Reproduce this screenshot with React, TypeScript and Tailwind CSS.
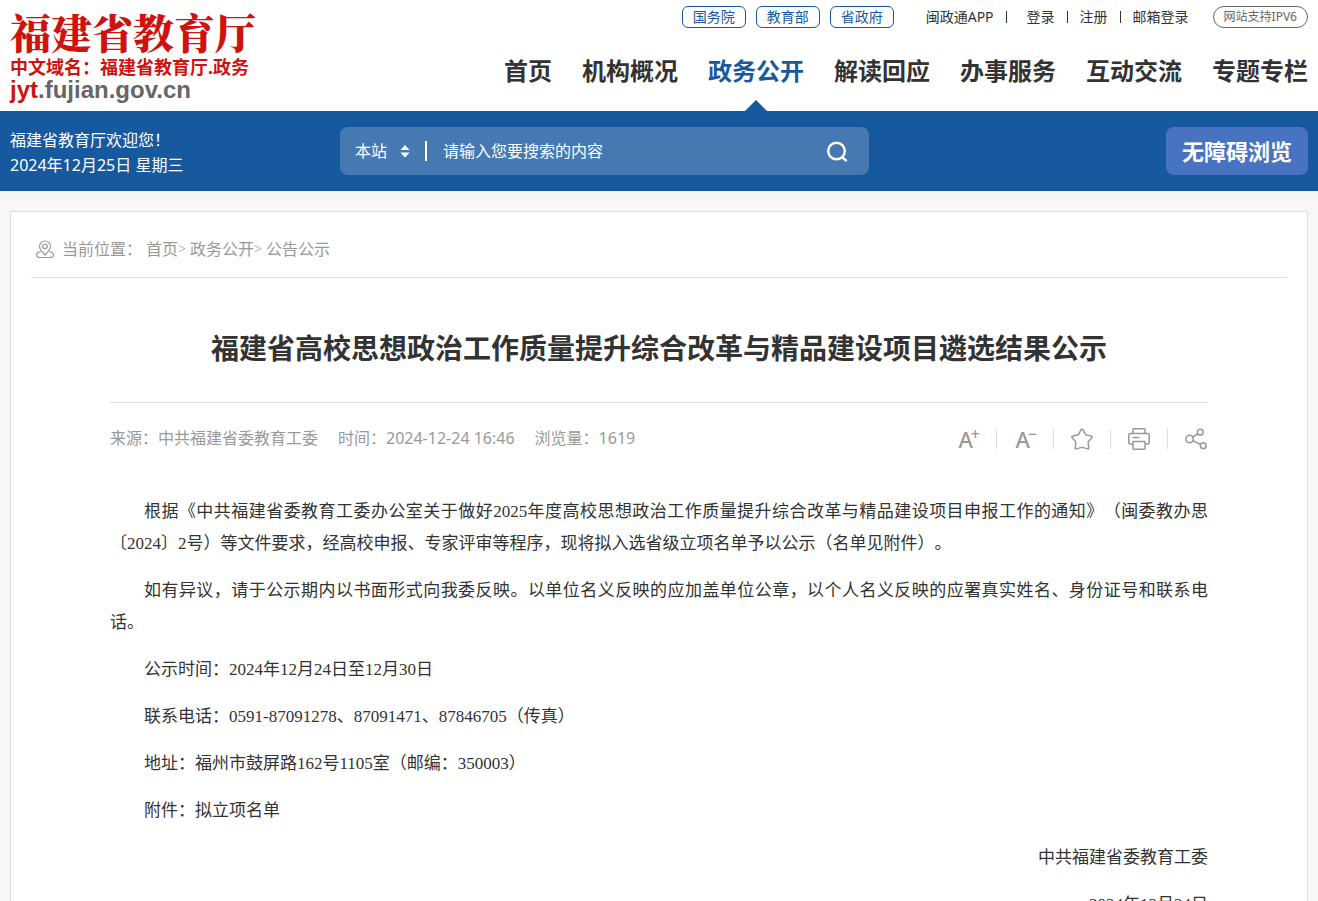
import type { ReactNode } from 'react';

const portals = ['国务院', '教育部', '省政府'];

const navItems = [
  { label: '首页' },
  { label: '机构概况' },
  { label: '政务公开', active: true },
  { label: '解读回应' },
  { label: '办事服务' },
  { label: '互动交流' },
  { label: '专题专栏' },
];

const paragraphs = [
  '根据《中共福建省委教育工委办公室关于做好2025年度高校思想政治工作质量提升综合改革与精品建设项目申报工作的通知》（闽委教办思〔2024〕2号）等文件要求，经高校申报、专家评审等程序，现将拟入选省级立项名单予以公示（名单见附件）。',
  '如有异议，请于公示期内以书面形式向我委反映。以单位名义反映的应加盖单位公章，以个人名义反映的应署真实姓名、身份证号和联系电话。',
  '公示时间：2024年12月24日至12月30日',
  '联系电话：0591-87091278、87091471、87846705（传真）',
  '地址：福州市鼓屏路162号1105室（邮编：350003）',
];

function Logo() {
  return (
    <a href="#" className="block pt-2 text-[#d0120f]">
      <span className="block font-['Noto_Serif_CJK_SC','Noto_Sans_CJK_SC',serif] text-[41px] leading-[48px] font-black">
        福建省教育厅
      </span>
      <span className="block text-lg leading-[22px] font-bold">中文域名：福建省教育厅.政务</span>
      <span className="block font-['Liberation_Sans',sans-serif] text-2xl leading-6 font-bold text-[#666]">
        <span className="text-[#d0120f]">jyt</span>.fujian.gov.cn
      </span>
    </a>
  );
}

function TopLinks() {
  return (
    <div className="flex items-center text-sm leading-5 text-[#333]">
      <div className="flex gap-[10px]">
        {portals.map((name) => (
          <a
            key={name}
            href="#"
            className="rounded-md border border-[#17599f] px-[10px] text-[#17599f]"
          >
            {name}
          </a>
        ))}
      </div>
      <div className="mr-6 ml-8 flex items-center gap-3">
        <a href="#">闽政通APP</a>
        <span className="mr-2 h-3 w-px bg-[#333]" />
        <a href="#">登录</a>
        <span className="h-3 w-px bg-[#333]" />
        <a href="#">注册</a>
        <span className="h-3 w-px bg-[#333]" />
        <a href="#">邮箱登录</a>
      </div>
      <a href="#" className="rounded-full border border-[#666] px-[10px] text-xs leading-5 text-[#666]">
        网站支持IPV6
      </a>
    </div>
  );
}

function Header() {
  return (
    <header className="flex justify-between bg-white px-[10px]">
      <Logo />
      <div className="flex h-[111px] flex-col items-end pt-[6px]">
        <TopLinks />
        <nav className="flex flex-1 gap-[30px] pt-[25px] text-2xl leading-9 font-bold text-[#333]">
          {navItems.map((item) => (
            <a
              key={item.label}
              href="#"
              className={item.active ? 'relative text-[#17599f]' : 'relative'}
            >
              {item.label}
              {item.active && (
                <svg
                  className="absolute bottom-0 left-1/2 -translate-x-1/2"
                  width="22"
                  height="11"
                  viewBox="0 0 22 11"
                >
                  <path d="M11 0 22 11H0Z" fill="#17599f" />
                </svg>
              )}
            </a>
          ))}
        </nav>
      </div>
    </header>
  );
}

function SearchBar() {
  return (
    <div className="flex h-20 items-center bg-[#17599f] px-[10px] text-base text-white">
      <div className="w-[330px] pt-1 leading-[25px]">
        <p>福建省教育厅欢迎您！</p>
        <p>2024年12月25日 星期三</p>
      </div>
      <form
        className="flex h-12 w-[529px] items-center rounded-lg bg-[#4679b2] pl-[15px]"
        onSubmit={(e) => e.preventDefault()}
      >
        <div className="relative">
          <select aria-label="搜索范围" className="w-14 appearance-none bg-transparent outline-none">
            <option>本站</option>
          </select>
          <svg
            className="pointer-events-none absolute top-1/2 right-0 -translate-y-1/2"
            width="12"
            height="14"
            viewBox="0 0 12 14"
            fill="#fff"
          >
            <path d="M6 1 10.500 6H1.500ZM6 13.500 1.500 8.500H10.500Z" />
          </svg>
        </div>
        <span className="ml-3.5 h-5 w-0.5 bg-white" />
        <input
          type="text"
          aria-label="搜索内容"
          placeholder="请输入您要搜索的内容"
          className="ml-4 min-w-0 flex-1 bg-transparent outline-none placeholder:text-white"
        />
        <button type="submit" aria-label="搜索" className="px-5">
          <svg width="24" height="24" viewBox="0 0 24 24" fill="none" stroke="#fff" strokeWidth="2.4">
            <circle cx="11.5" cy="12" r="8.3" />
            <path d="m17.5 18.5 3.5 3" strokeLinecap="round" />
          </svg>
        </button>
      </form>
      <button type="button" className="ml-auto h-12 rounded-lg bg-[#4773c1] px-4 text-[22px] font-bold">
        无障碍浏览
      </button>
    </div>
  );
}

function Breadcrumb() {
  return (
    <nav className="flex items-center border-b border-[#ddd] pt-[25px] pb-4 pl-1 text-base leading-6 text-[#999]">
      <svg
        className="mr-[7px]"
        width="20"
        height="20"
        viewBox="0 0 20 20"
        fill="none"
        stroke="#999"
        strokeWidth="1.2"
      >
        <path d="M10 16C7 13 4.5 10.4 4.5 7.5a5.5 5.5 0 0 1 11 0C15.5 10.4 13 13 10 16Z" />
        <circle cx="10" cy="7.3" r="2.3" />
        <path d="M5.6 12.6C3 13.2 1.500 14.500 1.500 16c0 2 2 2.500 4 2.500h9c2 0 4-.5 4-2.500 0-1.500-1.500-2.800-4.100-3.400" />
      </svg>
      <span className="mr-1">当前位置：</span>
      <a href="#">首页</a>
      <span className="mr-1 text-sm text-[#bbb]">&gt;</span>
      <a href="#">政务公开</a>
      <span className="mr-1 text-sm text-[#bbb]">&gt;</span>
      <a href="#">公告公示</a>
    </nav>
  );
}

function ToolButton({ label, children }: { label: string; children: ReactNode }) {
  return (
    <button type="button" aria-label={label} className="flex h-6 items-center">
      {children}
    </button>
  );
}

function Divider() {
  return <span className="mx-4 h-5 w-px bg-[#ddd]" />;
}

function Toolbar() {
  return (
    <div className="flex items-center text-[#999]">
      <ToolButton label="放大字体">
        <span className="flex w-6 justify-end text-[22px] leading-[22px] font-medium">
          A<sup className="top-0 -ml-0.5 text-base leading-3">+</sup>
        </span>
      </ToolButton>
      <Divider />
      <ToolButton label="缩小字体">
        <span className="flex w-6 justify-end text-[22px] leading-[22px] font-medium">
          A<sup className="top-0 -ml-0.5 text-base leading-3">−</sup>
        </span>
      </ToolButton>
      <Divider />
      <ToolButton label="收藏">
        <svg width="24" height="24" viewBox="0 0 24 24" fill="none" stroke="currentColor" strokeWidth="1.5" strokeLinejoin="round">
          <path d="M11.2 2.6q.8-1.200 1.600 0l2.600 4.700q.3.500.8.600l5.200 1.200q1.300.4.500 1.400l-3.400 4q-.4.400-.3 1l.5 5.500q0 1.300-1.200.9l-5-1.500q-.5-.1-1 0l-5 1.500q-1.200.4-1.200-.9l.5-5.500q.1-.6-.3-1l-3.400-4q-.8-1 .5-1.400l5.200-1.200q.5-.1.8-.6Z" />
        </svg>
      </ToolButton>
      <Divider />
      <ToolButton label="打印">
        <svg width="24" height="24" viewBox="0 0 24 24" fill="none" stroke="currentColor" strokeWidth="1.5" strokeLinejoin="round">
          <path d="M6 6.5V2.5q0-.7.7-.7h10.600q.7 0 .7.7v4" />
          <path d="M6 17H3q-1.200 0-1.200-1.200V7.700q0-1.200 1.200-1.200h18q1.200 0 1.200 1.200v8.100q0 1.200-1.200 1.200h-3" />
          <rect x="6" y="14.5" width="12" height="7.7" rx="0.7" />
          <path d="M5.5 10.500h7" />
        </svg>
      </ToolButton>
      <Divider />
      <ToolButton label="分享">
        <svg width="24" height="24" viewBox="0 0 24 24" fill="none" stroke="currentColor" strokeWidth="1.5">
          <circle cx="5.5" cy="12" r="3.7" />
          <circle cx="16.3" cy="5.2" r="2.9" />
          <circle cx="19.3" cy="18.7" r="2.9" />
          <path d="m8.700 10 5.200-3.300M8.900 13.600l7.700 3.900" />
        </svg>
      </ToolButton>
    </div>
  );
}

function Article() {
  return (
    <article className="mx-[79px]">
      <h1 className="border-b border-[#ddd] pt-[49px] pb-[33px] text-center text-[28px] leading-[42px] font-bold text-[#333]">
        福建省高校思想政治工作质量提升综合改革与精品建设项目遴选结果公示
      </h1>
      <div className="flex items-start justify-between py-6">
        <div className="flex gap-5 text-base leading-[22px] text-[#999]">
          <span>来源：中共福建省委教育工委</span>
          <span>时间：2024-12-24 16:46</span>
          <span>浏览量：1619</span>
        </div>
        <Toolbar />
      </div>
      <div className="space-y-[15px] pt-[21px] pb-10 text-justify font-['Liberation_Serif','Noto_Sans_CJK_SC',serif] text-[17px] leading-8 text-[#333] [text-spacing-trim:space-all]">
        {paragraphs.map((text) => (
          <p key={text} className="indent-[2em]">
            {text}
          </p>
        ))}
        <p className="indent-[2em]">
          附件：<a href="#">拟立项名单</a>
        </p>
        <p className="text-right">中共福建省委教育工委</p>
        <p className="text-right">2024年12月24日</p>
      </div>
    </article>
  );
}

export default function App() {
  return (
    <div
      lang="zh-CN"
      className="min-h-screen bg-[#f7f7f7] font-['Noto_Sans','Noto_Sans_CJK_SC',sans-serif]"
    >
      <Header />
      <SearchBar />
      <main className="mx-[10px] mt-5 border border-[#ddd] bg-white px-5">
        <Breadcrumb />
        <Article />
      </main>
    </div>
  );
}
